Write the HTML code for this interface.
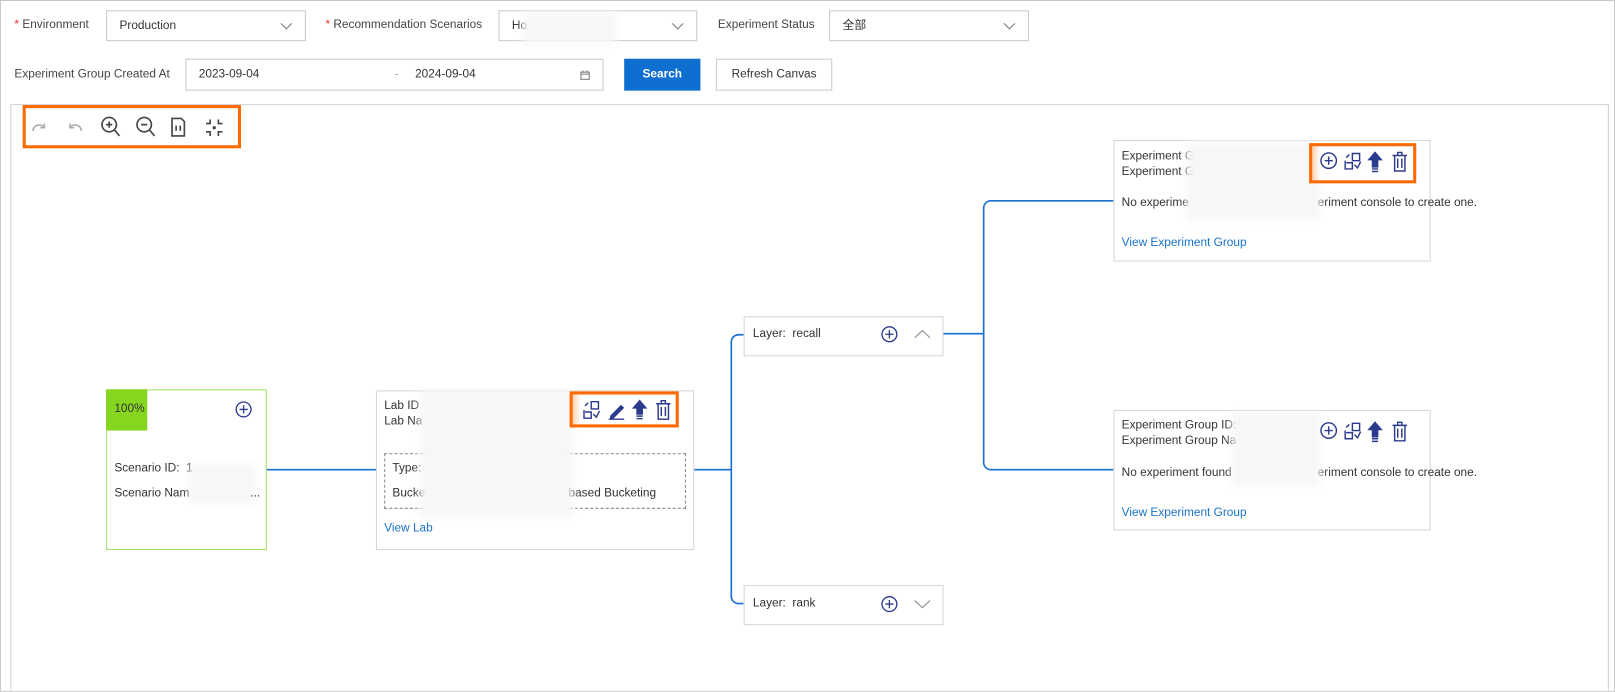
<!DOCTYPE html>
<html><head><meta charset="utf-8"><style>
*{box-sizing:border-box;margin:0;padding:0}
body{width:1615px;height:692px;background:#fff;overflow:hidden}
#w{position:absolute;left:0;top:0;width:1568px;height:672px;transform:scale(1.03);transform-origin:0 0;font-family:"Liberation Sans","Noto Sans CJK SC",sans-serif;font-size:11.5px;color:#333}
.a{position:absolute;white-space:nowrap}
.frame{left:0;top:0;width:1568px;height:672px;border:1px solid #c8c8c8}
.sel{border:1px solid #c9c9c9;background:#fff;height:30px;padding:0 12px;line-height:28px;color:#333}
.chev{position:absolute;right:14px;top:8px;width:8px;height:8px;border-right:1px solid #777;border-bottom:1px solid #777;transform:rotate(45deg)}
.lbl{color:#444}
.star{color:#e33}
.node{background:#fff;border:1px solid #d6d6d6}
.blur{background:#f7f7f7;box-shadow:0 0 8px 6px #f7f7f7}
.link{color:#1a73c8}
.ob{border:3px solid #ff6a00}
</style></head><body><div id="w">
<div class="a frame"></div>

<div class="a lbl" style="left:14px;top:18px"><span class="star">* </span>Environment</div>
<div class="a sel" style="left:103px;top:10px;width:194px">Production<span class="chev"></span></div>
<div class="a lbl" style="left:316px;top:18px"><span class="star">* </span>Recommendation Scenarios</div>
<div class="a sel" style="left:484px;top:10px;width:193px">Ho<span class="chev"></span></div>
<div class="a blur" style="left:514px;top:17px;width:78px;height:20px"></div>
<div class="a lbl" style="left:697px;top:18px">Experiment Status</div>
<div class="a sel" style="left:805px;top:10px;width:194px">全部<span class="chev"></span></div>

<div class="a lbl" style="left:14px;top:66px">Experiment Group Created At</div>
<div class="a sel" style="left:180px;top:57px;width:406px;height:31px;line-height:29px">2023-09-04<span style="position:absolute;left:202px;color:#aaa">-</span><span style="position:absolute;left:222px">2024-09-04</span>
<svg style="position:absolute;right:12px;top:10px" width="10" height="10" viewBox="0 0 10 10"><rect x="1" y="2" width="8" height="7" fill="none" stroke="#777"/><line x1="1" y1="4" x2="9" y2="4" stroke="#777"/><line x1="3" y1="0.5" x2="3" y2="2.5" stroke="#777"/><line x1="7" y1="0.5" x2="7" y2="2.5" stroke="#777"/></svg></div>
<div class="a" style="left:606px;top:57px;width:74px;height:31px;background:#0f6fd1;color:#fff;font-weight:bold;text-align:center;line-height:31px">Search</div>
<div class="a" style="left:695px;top:57px;width:113px;height:31px;border:1px solid #c9c9c9;text-align:center;line-height:29px;color:#333">Refresh Canvas</div>

<div class="a" style="left:10px;top:101px;width:1552px;height:571px;border:1px solid #d4d4d4"></div>
<div class="a ob" style="left:22px;top:102px;width:212px;height:42px"></div>
<svg class="a" style="left:28px;top:112px" width="200" height="24" viewBox="0 0 200 24">
<g fill="none" stroke="#aaa" stroke-width="1.6"><path d="M4 15a6 6 0 0 1 11-3"/><path d="M15 8v4h-4"/><path d="M51 15a6 6 0 0 0-11-3"/><path d="M40 8v4h4"/></g>
<g fill="none" stroke="#444" stroke-width="1.6"><circle cx="78" cy="9" r="7"/><path d="M83 14l5 6M75 9h6M78 6v6"/><circle cx="112" cy="9" r="7"/><path d="M117 14l5 6M109 9h6"/><path d="M139 3h9l3 3v14h-12z"/><path d="M143 10v5M147 10v5"/><path d="M176 4v4h-4M184 4v4h4M176 20v-4h-4M184 20v-4h4"/></g><circle cx="180" cy="12" r="1.6" fill="#444"/>
</svg>

<svg class="a" style="left:0;top:0" width="1568" height="672"><g fill="none" stroke="#1a6fd1" stroke-width="1.6">
<path d="M258 456H365"/><path d="M673 456H710"/><path d="M722 325h-5a7 7 0 0 0-7 7V579a7 7 0 0 0 7 7h5"/>
<path d="M915 324H955"/><path d="M1081 195h-119a7 7 0 0 0-7 7V449a7 7 0 0 0 7 7h119"/></g></svg>

<!-- scenario -->
<div class="a node" style="left:103px;top:378px;width:156px;height:156px;border-color:#9fe06a"></div>
<div class="a" style="left:103px;top:378px;width:40px;height:40px;background:#86d61f;line-height:38px;padding-left:8px;color:#333">100%</div>
<svg class="a" style="left:228px;top:389px" width="17" height="17"><circle cx="8.5" cy="8.5" r="7.2" fill="none" stroke="#2b3a8c" stroke-width="1.3"/><path d="M4.5 8.5h8M8.5 4.5v8" stroke="#2b3a8c" stroke-width="1.3"/></svg>
<div class="a" style="left:111px;top:449px">Scenario ID:&nbsp; 1</div>
<div class="a" style="left:111px;top:473px">Scenario Nam</div>
<div class="a blur" style="left:190px;top:456px;width:52px;height:28px"></div>
<div class="a" style="left:243px;top:473px">...</div>

<!-- lab -->
<div class="a node" style="left:365px;top:379px;width:309px;height:155px"></div>
<div class="a" style="left:373px;top:387px;line-height:15px">Lab ID<br>Lab Na</div>
<div class="a" style="left:373px;top:440px;width:293px;height:54px;border:1px dashed #888"></div>
<div class="a" style="left:381px;top:449px">Type:</div>
<div class="a" style="left:381px;top:473px">Bucke</div>
<div class="a" style="right:931px;top:473px">based Bucketing</div>
<div class="a link" style="left:373px;top:507px">View Lab</div>
<div class="a blur" style="left:414px;top:384px;width:136px;height:112px"></div>
<div class="a ob" style="left:553px;top:380px;width:106px;height:35px;background:linear-gradient(90deg,#ffd2b0 0,#fff 8px)"></div>
<svg class="a" style="left:564px;top:386px" width="90" height="24" viewBox="0 0 90 24" fill="none" stroke="#2b3a8c" stroke-width="1.4">
<path d="M3 12v8h7v-6H4M10 4h7v7h-7zM4 8l3-3M12 16l3 3 3-6"/>
<path d="M29 18l10-10 2 2-10 10h-2z" fill="#2b3a8c"/><path d="M27 21h15"/>
<path d="M57 3l-6 7h3.5v6h5v-6H63z" fill="#2b3a8c"/><path d="M54 18h6M54 20.5h6"/>
<path d="M73 6h14M78 6V3h4v3M75 6v15h10V6M78 9v9M82 9v9"/></svg>

<!-- layers -->
<div class="a node" style="left:722px;top:307px;width:194px;height:39px"></div>
<div class="a" style="left:731px;top:318px">Layer:&nbsp; recall</div>
<svg class="a" style="left:855px;top:316px" width="17" height="17"><circle cx="8.5" cy="8.5" r="7.2" fill="none" stroke="#2b3a8c" stroke-width="1.3"/><path d="M4.5 8.5h8M8.5 4.5v8" stroke="#2b3a8c" stroke-width="1.3"/></svg>
<svg class="a" style="left:887px;top:319px" width="17" height="10"><path d="M1 9l7.5-7 7.5 7" fill="none" stroke="#999" stroke-width="1.2"/></svg>
<div class="a node" style="left:722px;top:568px;width:194px;height:39px"></div>
<div class="a" style="left:731px;top:580px">Layer:&nbsp; rank</div>
<svg class="a" style="left:855px;top:578px" width="17" height="17"><circle cx="8.5" cy="8.5" r="7.2" fill="none" stroke="#2b3a8c" stroke-width="1.3"/><path d="M4.5 8.5h8M8.5 4.5v8" stroke="#2b3a8c" stroke-width="1.3"/></svg>
<svg class="a" style="left:887px;top:582px" width="17" height="10"><path d="M1 1l7.5 7 7.5-7" fill="none" stroke="#999" stroke-width="1.2"/></svg>

<!-- exp group 1 -->
<div class="a node" style="left:1081px;top:136px;width:308px;height:118px"></div>
<div class="a" style="left:1089px;top:145px;line-height:15px">Experiment G<br>Experiment G</div>
<div class="a" style="left:1089px;top:191px">No experime</div>
<div class="a" style="right:134px;top:191px">eriment console to create one.</div>
<div class="a link" style="left:1089px;top:230px">View Experiment Group</div>
<div class="a blur" style="left:1158px;top:145px;width:118px;height:62px"></div>
<div class="a ob" style="left:1271px;top:139px;width:104px;height:39px;background:linear-gradient(90deg,#ffd2b0 0,#fff 8px)"></div>
<svg class="a" style="left:1281px;top:146px" width="90" height="24" viewBox="0 0 90 24" fill="none" stroke="#2b3a8c" stroke-width="1.4">
<circle cx="9" cy="10" r="7.5"/><path d="M5 10h8M9 6v8"/>
<path d="M25 10v8h7v-6h-6M32 3h7v7h-7zM26 7l3-3M34 14l3 3 3-6"/>
<path d="M54 2l-6 7h3.5v7h5V9H60z" fill="#2b3a8c"/><path d="M51 18h6M51 20.5h6"/>
<path d="M71 5h14M76 5V2h4v3M73 5v15h10V5M76 8v9M80 8v9"/></svg>

<!-- exp group 2 -->
<div class="a node" style="left:1081px;top:398px;width:308px;height:117px"></div>
<div class="a" style="left:1089px;top:406px;line-height:15px">Experiment Group ID:<br>Experiment Group Na</div>
<div class="a" style="left:1089px;top:453px">No experiment found</div>
<div class="a" style="right:134px;top:453px">eriment console to create one.</div>
<div class="a blur" style="left:1202px;top:406px;width:74px;height:60px"></div>
<div class="a link" style="left:1089px;top:492px">View Experiment Group</div>
<svg class="a" style="left:1281px;top:408px" width="90" height="24" viewBox="0 0 90 24" fill="none" stroke="#2b3a8c" stroke-width="1.4">
<circle cx="9" cy="10" r="7.5"/><path d="M5 10h8M9 6v8"/>
<path d="M25 10v8h7v-6h-6M32 3h7v7h-7zM26 7l3-3M34 14l3 3 3-6"/>
<path d="M54 2l-6 7h3.5v7h5V9H60z" fill="#2b3a8c"/><path d="M51 18h6M51 20.5h6"/>
<path d="M71 5h14M76 5V2h4v3M73 5v15h10V5M76 8v9M80 8v9"/></svg>
</div></body></html>
